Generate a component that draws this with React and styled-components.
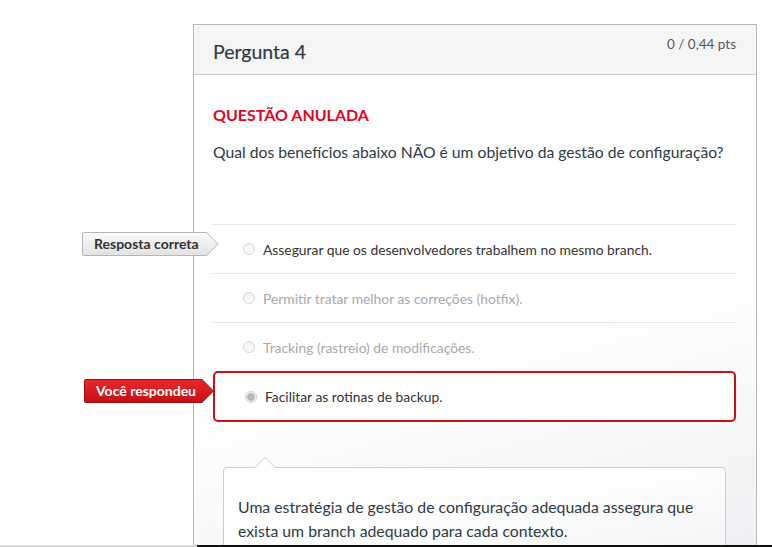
import React from "react";
import styled, { createGlobalStyle } from "styled-components";

const GlobalStyle = createGlobalStyle`
  html, body {
    margin: 0;
    padding: 0;
    background: #fff;
    font-family: Lato, "Open Sans", sans-serif;
    overflow: hidden;
  }
`;

const answers = [
  { text: "Assegurar que os desenvolvedores trabalhem no mesmo branch.", faded: false, tag: "correct" },
  { text: "Permitir tratar melhor as correções (hotfix).", faded: true },
  { text: "Tracking (rastreio) de modificações.", faded: true },
  { text: "Facilitar as rotinas de backup.", faded: false, tag: "yours", selected: true },
];

export default function App() {
  return (
    <Page>
      <GlobalStyle />
      <Content>
        <Card>
          <Header>
            <Title>Pergunta 4</Title>
            <Points>0 / 0,44 pts</Points>
          </Header>
          <Body>
            <Annulled>QUESTÃO ANULADA</Annulled>
            <Question>
              Qual dos benefícios abaixo NÃO é um objetivo da gestão de configuração?
            </Question>
            <AnswerList>
              {answers.map((a, i) =>
                a.tag === "yours" ? (
                  <ChosenBox key={i}>
                    <Tag $red>
                      <TagInner $red>Você respondeu</TagInner>
                    </Tag>
                    <Radio $selected />
                    <AnswerText>{a.text}</AnswerText>
                  </ChosenBox>
                ) : (
                  <Answer key={i}>
                    {a.tag === "correct" && (
                      <Tag>
                        <TagInner>Resposta correta</TagInner>
                      </Tag>
                    )}
                    <Radio />
                    <AnswerText $faded={a.faded}>{a.text}</AnswerText>
                  </Answer>
                )
              )}
            </AnswerList>
            <Comment>
              <CommentText>
                Uma estratégia de gestão de configuração adequada assegura que
                exista um branch adequado para cada contexto.
              </CommentText>
            </Comment>
          </Body>
        </Card>
      </Content>
      <BottomStrip>
        <StripLeft />
        <StripRight />
      </BottomStrip>
    </Page>
  );
}

const Page = styled.div`
  height: 547px;
  display: flex;
  flex-direction: column;
`;

const Content = styled.div`
  flex: 1;
  overflow: hidden;
  padding: 24px 0 0 193px;
`;

const Card = styled.section`
  width: 564px;
  box-sizing: border-box;
  border: 1px solid #b5b9bc;
  border-bottom: none;
  min-height: 560px;
  background: linear-gradient(165deg, #ffffff 55%, #eceef1 100%);
`;

const Header = styled.header`
  height: 50px;
  box-sizing: border-box;
  background: #f5f5f5;
  border-bottom: 1px solid #c7cdd1;
  display: flex;
  justify-content: space-between;
  padding: 0 20px 0 19px;
`;

const Title = styled.h2`
  margin: 0;
  font-size: 19.5px;
  font-weight: 400;
  color: #2d3b45;
  line-height: 54px;
  -webkit-text-stroke: 0.2px #2d3b45;
`;

const Points = styled.span`
  font-size: 13.5px;
  color: #555;
  padding-top: 11px;
`;

const Body = styled.div`
  padding: 30px 20px 0 19px;
`;

const Annulled = styled.div`
  color: #e0061f;
  font-weight: 700;
  font-size: 16px;
  line-height: 20px;
`;

const Question = styled.div`
  margin-top: 17px;
  font-size: 15.7px;
  line-height: 20px;
  color: #2d3b45;
`;

const AnswerList = styled.div`
  margin-top: 62px;
  border-top: 1px solid #e4e6e8;
`;

const Answer = styled.div`
  position: relative;
  height: 48px;
  border-bottom: 1px solid #e4e6e8;
  display: flex;
  align-items: center;
  padding-left: 30px;
`;

const ChosenBox = styled.div`
  position: relative;
  height: 47px;
  margin-top: -1px;
  border: 2px solid #c8101a;
  border-radius: 5px;
  display: flex;
  align-items: center;
  padding-left: 30px;
  background: #fff;
`;

const Radio = styled.span`
  width: 12px;
  height: 12px;
  box-sizing: border-box;
  border-radius: 50%;
  border: 1px solid #d4d4d4;
  background: ${(p) =>
    p.$selected
      ? "radial-gradient(circle, #b8b8b8 0 3.5px, #eee 4px)"
      : "linear-gradient(#f4f4f4, #fafafa)"};
  margin-right: 8px;
  flex-shrink: 0;
`;

const AnswerText = styled.span`
  font-size: 13.85px;
  color: ${(p) => (p.$faded ? "#a9a9a9" : "#333")};
`;

const Tag = styled.div`
  position: absolute;
  left: -131px;
  top: ${(p) => (p.$red ? "6px" : "7px")};
  padding: 1px;
  background: ${(p) => (p.$red ? "#a50d10" : "#b5b5b5")};
  clip-path: polygon(0 0, calc(100% - 12px) 0, 100% 50%, calc(100% - 12px) 100%, 0 100%);
  border-radius: 2px;
`;

const TagInner = styled.div`
  height: 22px;
  line-height: 22px;
  box-sizing: border-box;
  padding: 0 ${(p) => (p.$red ? "17px" : "19px")} 0 11px;
  font-size: 14px;
  font-weight: 700;
  white-space: nowrap;
  color: ${(p) => (p.$red ? "#fff" : "#333")};
  background: ${(p) =>
    p.$red
      ? "linear-gradient(#e8282c, #c41015)"
      : "linear-gradient(#fafafa, #e2e2e2)"};
  clip-path: polygon(0 0, calc(100% - 11px) 0, 100% 50%, calc(100% - 11px) 100%, 0 100%);
`;

const Comment = styled.div`
  position: relative;
  margin: 45px 10px 0 10px;
  border: 1px solid #c7cdd1;
  border-radius: 4px;
  background: linear-gradient(170deg, #fff 40%, #f2f3f5);
  padding: 27px 15px 20px 14px;

  &::before,
  &::after {
    content: "";
    position: absolute;
    left: 31px;
    border: 10px solid transparent;
    border-top: none;
  }
  &::before {
    top: -11px;
    border-bottom-color: #c7cdd1;
  }
  &::after {
    top: -10px;
    border-bottom-color: #fff;
  }
`;

const CommentText = styled.p`
  margin: 0;
  font-size: 15.8px;
  line-height: 24px;
  color: #2d3b45;
`;

const BottomStrip = styled.div`
  height: 2px;
  display: flex;
`;

const StripLeft = styled.div`
  width: 197px;
  background: #d8d8d8;
`;

const StripRight = styled.div`
  flex: 1;
  background: #111;
`;
